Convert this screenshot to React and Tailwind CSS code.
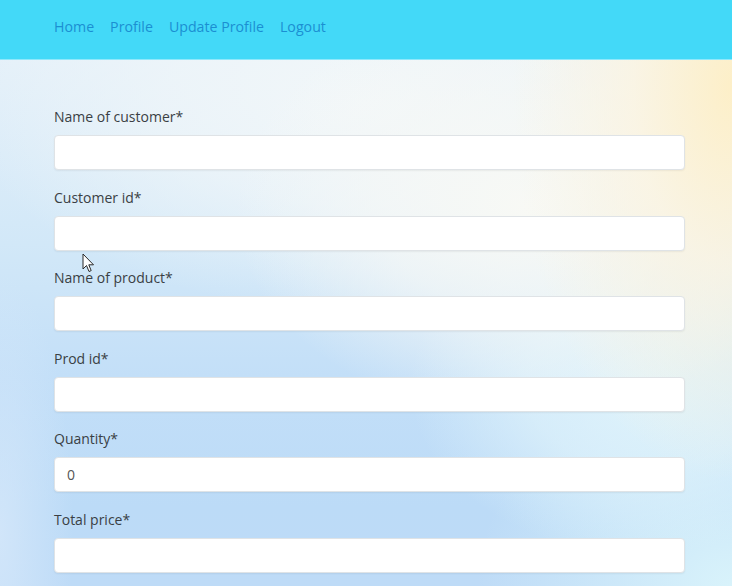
import React from "react";

const fields = [
  { label: "Name of customer*", value: "" },
  { label: "Customer id*", value: "" },
  { label: "Name of product*", value: "" },
  { label: "Prod id*", value: "" },
  { label: "Quantity*", value: "0" },
  { label: "Total price*", value: "" },
];

export default function App() {
  return (
    <div
      className="relative w-[732px] h-[586px] overflow-hidden text-[#333]"
      style={{ fontFamily: '"Open Sans", "Noto Sans", sans-serif' }}
    >
      <nav className="h-[60px] bg-[#43d9f8] flex items-center pl-[54px] gap-[16px] text-[14.2px] text-[#1b8fd2] pb-[5px] border-b border-[#8fe8fb]">
        <span>Home</span>
        <span>Profile</span>
        <span>Update Profile</span>
        <span>Logout</span>
      </nav>
      <main className="h-[526px] pt-[45px] px-[54px] pr-[47px] bg-[radial-gradient(ellipse_30%_75%_at_100%_5%,rgba(253,239,200,1)_0%,rgba(252,244,224,0.8)_45%,rgba(250,247,238,0)_100%),radial-gradient(ellipse_40%_40%_at_72%_28%,rgba(248,249,245,1)_0%,rgba(246,248,246,0.7)_50%,rgba(246,248,246,0)_100%),radial-gradient(ellipse_55%_40%_at_50%_8%,rgba(242,247,249,1)_0%,rgba(240,246,249,0.7)_50%,rgba(240,246,249,0)_100%),radial-gradient(ellipse_32%_32%_at_88%_62%,rgba(223,243,251,1)_0%,rgba(223,243,251,0.7)_50%,rgba(223,243,251,0)_100%),radial-gradient(ellipse_35%_40%_at_100%_100%,rgba(218,244,251,0.95)_0%,rgba(218,244,251,0)_100%),radial-gradient(ellipse_10%_50%_at_0%_90%,rgba(214,232,250,0.8)_0%,rgba(214,232,250,0)_100%),linear-gradient(180deg,#e4f0f9_0%,#d2e8f8_35%,#c3dff8_60%,#bcdbf7_85%,#bedbf7_100%)]">
        {fields.map((f) => (
          <div key={f.label} className="mb-[15.6px]">
            <div className="h-[24px] leading-[24px] mb-[6px] text-[14px] text-[#3a3f44]">
              {f.label}
            </div>
            <div className="h-[35px] bg-white rounded-[4px] border border-[#dfe3e6] shadow-[0_1px_2px_rgba(0,0,0,0.06)] flex items-center pl-[12px] text-[14px] text-[#555]">
              {f.value}
            </div>
          </div>
        ))}
      </main>
      <svg
        className="absolute left-[82px] top-[253px]"
        width="13"
        height="21"
        viewBox="0 0 13 21"
      >
        <path
          d="M1 1 L1 16 L4.5 12.5 L7 18.5 L9.2 17.6 L6.8 11.8 L11.5 11.8 Z"
          fill="#ffffff"
          stroke="#2a2a2a"
          strokeWidth="1"
          strokeLinejoin="round"
        />
      </svg>
    </div>
  );
}
